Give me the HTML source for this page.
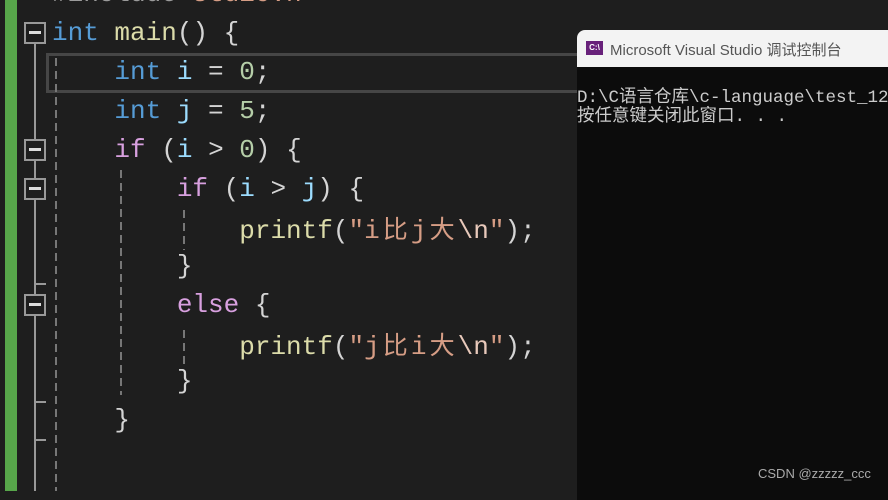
<!DOCTYPE html>
<html><head><meta charset="utf-8"><style>
body{margin:0;width:888px;height:491px;background:#1e1e1e;overflow:hidden;position:relative;font-family:"Liberation Mono","Noto Sans CJK SC",monospace}
.g{position:absolute;left:5px;top:0;width:12px;height:491px;background:#57a64a}
.ln{position:absolute;left:52px;font-size:26px;line-height:38px;white-space:pre;color:#d4d4d4}
.k{color:#569cd6}.f{color:#dcdcaa}.v{color:#9cdcfe}.n{color:#b5cea8}.c{color:#d8a0df}.s{color:#d69d85}.e{color:#e8c9bb}
.cj{display:inline-block;width:31.2px;font-family:"Noto Sans CJK SC",sans-serif;font-size:25px;text-align:center}
.box{position:absolute;left:24px;width:18px;height:18px;border:2px solid #999;background:#1e1e1e}
.box:after{content:"";position:absolute;left:3px;top:7px;width:12px;height:3px;background:#ddd}
.vl{position:absolute;left:34px;width:2px;background:#999}
.tk{position:absolute;left:34px;width:12px;height:2px;background:#999}
.dash{position:absolute;width:2px;background:repeating-linear-gradient(#777 0 8px,transparent 8px 13px)}
.con{position:absolute;left:577px;top:30px;width:320px;height:470px;background:#0c0c0c;border-radius:8px 0 0 0;overflow:hidden}
.tb{height:37px;background:#f3f3f3;position:relative}
</style></head><body>
<div class="g"></div>
<div class="ln" style="top:-25px;color:#9b9b9b">#include<span class="s">&lt;stdio.h&gt;</span></div>
<div style="position:absolute;left:46px;top:53px;width:540px;height:34px;border:3px solid #464646"></div>
<div class="vl" style="top:44px;height:447px"></div>
<div class="tk" style="top:283px"></div>
<div class="tk" style="top:401px"></div>
<div class="tk" style="top:439px"></div>
<div class="box" style="top:22px"></div>
<div class="box" style="top:139px"></div>
<div class="box" style="top:178px"></div>
<div class="box" style="top:294px"></div>
<div class="dash" style="left:55px;top:58px;height:433px"></div>
<div class="dash" style="left:120px;top:170px;height:225px"></div>
<div class="dash" style="left:183px;top:210px;height:40px"></div>
<div class="dash" style="left:183px;top:330px;height:35px"></div>
<div class="ln" style="top:14px"><span class="k">int</span> <span class="f">main</span>() {</div>
<div class="ln" style="top:53px">    <span class="k">int</span> <span class="v">i</span> = <span class="n">0</span>;</div>
<div class="ln" style="top:92px">    <span class="k">int</span> <span class="v">j</span> = <span class="n">5</span>;</div>
<div class="ln" style="top:131px">    <span class="c">if</span> (<span class="v">i</span> &gt; <span class="n">0</span>) {</div>
<div class="ln" style="top:170px">        <span class="c">if</span> (<span class="v">i</span> &gt; <span class="v">j</span>) {</div>
<div class="ln" style="top:209px">            <span class="f">printf</span>(<span class="s">"i<span class="cj">比</span>j<span class="cj">大</span></span><span class="e">\n</span><span class="s">"</span>);</div>
<div class="ln" style="top:247px">        }</div>
<div class="ln" style="top:286px">        <span class="c">else</span> {</div>
<div class="ln" style="top:325px">            <span class="f">printf</span>(<span class="s">"j<span class="cj">比</span>i<span class="cj">大</span></span><span class="e">\n</span><span class="s">"</span>);</div>
<div class="ln" style="top:362px">        }</div>
<div class="ln" style="top:401px">    }</div>
<div class="con">
<div class="tb">
<div style="position:absolute;left:9px;top:11px;width:17px;height:14px;background:#68217a;color:#fff;font:bold 8px 'Liberation Sans',sans-serif;line-height:14px;text-align:center">C:\</div>
<div style="position:absolute;left:33px;top:9px;font:15px 'Liberation Sans','Noto Sans CJK SC',sans-serif;color:#555">Microsoft Visual Studio 调试控制台</div>
</div>
<div style="position:absolute;left:0;top:59px;font-size:17.5px;line-height:19px;color:#ccc;white-space:pre;font-family:'Liberation Mono','Noto Sans CJK SC',monospace">D:\C语言仓库\c-language\test_12
按任意键关闭此窗口. . .</div>
<div style="position:absolute;left:181px;top:436px;font:13px 'Liberation Sans',sans-serif;color:#aaa">CSDN @zzzzz_ccc</div>
</div>
</body></html>
